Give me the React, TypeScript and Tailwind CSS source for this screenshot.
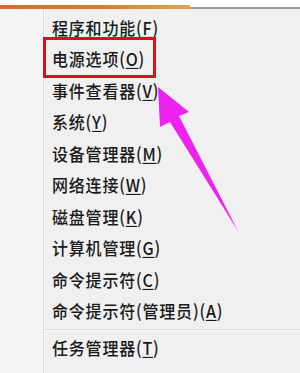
import React from 'react';

const items: { label: string; key: string }[] = [
    { label: '程序和功能', key: 'F' },
    { label: '电源选项', key: 'O' },
    { label: '事件查看器', key: 'V' },
    { label: '系统', key: 'Y' },
    { label: '设备管理器', key: 'M' },
    { label: '网络连接', key: 'W' },
    { label: '磁盘管理', key: 'K' },
    { label: '计算机管理', key: 'G' },
    { label: '命令提示符', key: 'C' },
    { label: '命令提示符(管理员)', key: 'A' },
];

const MenuRow: React.FC<{ label: string; hotkey: string }> = ({ label, hotkey }) => (
    <div className="h-[31.5px] flex items-center pl-[7px]">
        <span className="inline-block origin-left scale-y-[1.1] text-[16px] leading-none tracking-[0.8px] font-medium text-[#1a1a1a] whitespace-nowrap">
            {label}(<u className="underline-offset-2">{hotkey}</u>)
        </span>
    </div>
);

export default function App() {
    return (
        <div
            className="relative w-[300px] h-[373px] overflow-hidden bg-[#f0f0f0] flex flex-col"
            style={{ fontFamily: '"Microsoft YaHei", "Noto Sans CJK SC", "Noto Sans", sans-serif' }}
        >
            {/* top edge of the window above */}
            <div className="h-[9px] flex items-end bg-white flex-shrink-0">
                <div className="flex w-full h-[5px] items-end">
                    <div className="w-[190px] h-[4px] bg-gradient-to-r from-[#d5702a] via-[#d97a2c] to-[#e2a44a]" />
                    <div className="flex-1 h-[2px] bg-[#9c9c9c]" />
                </div>
            </div>

            <div className="flex flex-1">
                <div className="w-[44px] bg-[#f5f5f5] border-r border-[#d9d9d9] flex-shrink-0" />
                <div className="flex-1 flex flex-col pt-[2px] border-l border-white">
                    {items.map((it) => (
                        <MenuRow key={it.label} label={it.label} hotkey={it.key} />
                    ))}
                    <div className="mt-[3px] h-[2px] border-t border-[#d6d6d6] bg-white" />
                    <MenuRow label="任务管理器" hotkey="T" />
                </div>
            </div>

            {/* red highlight box */}
            <div className="absolute left-[43px] top-[37px] w-[113px] h-[41px] border-[3px] border-[#d3121c]" />

            {/* magenta arrow */}
            <svg className="absolute left-0 top-0" width="300" height="373" viewBox="0 0 300 373">
                <polygon
                    points="158,87 189,112 179,116 238,231 170,122 160,127"
                    fill="#ee22ee"
                />
            </svg>
        </div>
    );
}
